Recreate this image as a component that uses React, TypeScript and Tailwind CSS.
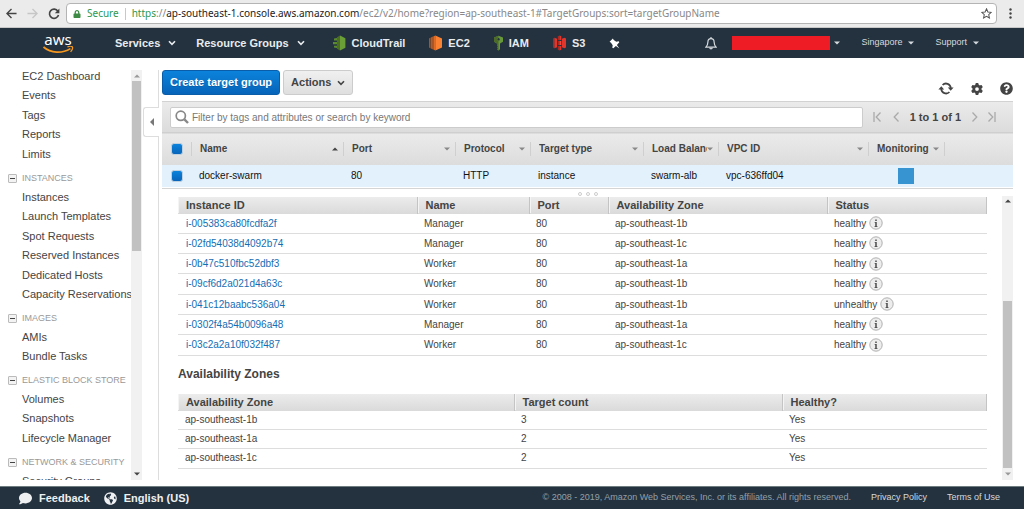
import { useState, type ReactNode } from 'react';
import { FaGlobeAmericas, FaComment, FaLock, FaQuestionCircle } from 'react-icons/fa';
import { FaGear } from 'react-icons/fa6';

const sections = [
  { title: '', items: ['EC2 Dashboard', 'Events', 'Tags', 'Reports', 'Limits'] },
  {
    title: 'INSTANCES',
    items: [
      'Instances',
      'Launch Templates',
      'Spot Requests',
      'Reserved Instances',
      'Dedicated Hosts',
      'Capacity Reservations',
    ],
  },
  { title: 'IMAGES', items: ['AMIs', 'Bundle Tasks'] },
  { title: 'ELASTIC BLOCK STORE', items: ['Volumes', 'Snapshots', 'Lifecycle Manager'] },
  { title: 'NETWORK & SECURITY', items: ['Security Groups'] },
];

const columns = [
  { label: 'Name', width: 'w-[152px]', sort: 'asc' },
  { label: 'Port', width: 'w-[112px]', sort: 'none' },
  { label: 'Protocol', width: 'w-[75px]', sort: 'none' },
  { label: 'Target type', width: 'w-[113px]', sort: 'none' },
  { label: 'Load Balancer', width: 'w-[75px]', sort: 'none' },
  { label: 'VPC ID', width: 'w-[150px]', sort: 'none' },
  { label: 'Monitoring', width: 'w-[76px]', sort: 'none' },
];

const targets = [
  { id: 'i-005383ca80fcdfa2f', name: 'Manager', port: 80, zone: 'ap-southeast-1b', status: 'healthy' },
  { id: 'i-02fd54038d4092b74', name: 'Manager', port: 80, zone: 'ap-southeast-1c', status: 'healthy' },
  { id: 'i-0b47c510fbc52dbf3', name: 'Worker', port: 80, zone: 'ap-southeast-1a', status: 'healthy' },
  { id: 'i-09cf6d2a021d4a63c', name: 'Worker', port: 80, zone: 'ap-southeast-1b', status: 'healthy' },
  { id: 'i-041c12baabc536a04', name: 'Worker', port: 80, zone: 'ap-southeast-1b', status: 'unhealthy' },
  { id: 'i-0302f4a54b0096a48', name: 'Manager', port: 80, zone: 'ap-southeast-1a', status: 'healthy' },
  { id: 'i-03c2a2a10f032f487', name: 'Worker', port: 80, zone: 'ap-southeast-1c', status: 'healthy' },
];

const zones = [
  { zone: 'ap-southeast-1b', count: 3, healthy: 'Yes' },
  { zone: 'ap-southeast-1a', count: 2, healthy: 'Yes' },
  { zone: 'ap-southeast-1c', count: 2, healthy: 'Yes' },
];

function Chevron({ className = '' }: { className?: string }) {
  return (
    <svg viewBox="0 0 8 6" className={`w-2 h-1.5 shrink-0 ${className}`} fill="none" stroke="currentColor" strokeWidth="1.6">
      <path d="M1 1.2 4 4.4 7 1.2" />
    </svg>
  );
}

function Triangle({ up = false, className = '' }: { up?: boolean; className?: string }) {
  return (
    <svg viewBox="0 0 6 4" className={`w-1.5 h-1 shrink-0 ${className}`} fill="currentColor">
      <path d={up ? 'M0 3.6 3 .4 6 3.6z' : 'M0 .4h6L3 3.6z'} />
    </svg>
  );
}

function BrowserBar() {
  return (
    <div className="h-[28px] shrink-0 flex items-center bg-[#ebebeb] border-b border-[#c8c8c8] pl-1.5 pr-3 font-['Noto_Sans',sans-serif]">
      <button aria-label="Back" className="text-[#444]">
        <svg viewBox="0 0 12 12" className="size-[11px]" fill="none" stroke="currentColor" strokeWidth="1.5">
          <path d="M11.5 6H1M6 1 1 6l5 5" />
        </svg>
      </button>
      <button aria-label="Forward" className="ml-2.5 text-[#c6c6c6]">
        <svg viewBox="0 0 12 12" className="size-[11px]" fill="none" stroke="currentColor" strokeWidth="1.5">
          <path d="M.5 6H11M6 1l5 5-5 5" />
        </svg>
      </button>
      <button aria-label="Reload" className="ml-2.5 text-[#444]">
        <svg viewBox="0 0 12 12" className="size-[12px]" fill="none" stroke="currentColor" strokeWidth="1.6">
          <path d="M9.9 3.2A4.6 4.6 0 1 0 10.5 7" />
          <path d="M11.4.6v4.6H6.8z" fill="currentColor" stroke="none" />
        </svg>
      </button>
      <div className="ml-1.5 flex-1 h-[21px] flex items-center bg-white border border-[#b4b4b4] rounded-sm pl-1.5 pr-1 text-[10px] whitespace-nowrap overflow-hidden">
        <button className="flex items-center gap-1.5 text-[#2b9752]">
          <FaLock className="size-2 text-[#3d8b45]" />
          Secure
        </button>
        <span className="w-px h-3 mx-1.5 bg-[#c8c8c8]" />
        <span className="text-[#888]">
          <span className="text-[#2b9752]">https</span>://
          <span className="text-[#222]">ap-southeast-1.console.aws.amazon.com</span>
          /ec2/v2/home?region=ap-southeast-1#TargetGroups:sort=targetGroupName
        </span>
        <button aria-label="Bookmark" className="ml-auto text-[#555]">
          <svg viewBox="0 0 12 12" className="size-[11px]" fill="none" stroke="currentColor" strokeWidth="1.1">
            <path d="m6 .9 1.5 3.4 3.7.4-2.8 2.5.8 3.7L6 9l-3.2 1.9.8-3.7L.8 4.7l3.7-.4z" />
          </svg>
        </button>
      </div>
      <button aria-label="Menu" className="ml-3 text-[#444]">
        <svg viewBox="0 0 3 11" className="w-[3px] h-[11px]" fill="currentColor">
          <circle cx="1.5" cy="1.5" r="1.2" />
          <circle cx="1.5" cy="5.5" r="1.2" />
          <circle cx="1.5" cy="9.5" r="1.2" />
        </svg>
      </button>
    </div>
  );
}

function CloudTrailIcon() {
  return (
    <svg viewBox="0 0 13 16" className="w-[13px] h-4">
      <path d="M4 2.2 7 .6v14.8l-3-1.6z" fill="#4c6b24" />
      <path d="m7 .6 5.4 2.6v9.6L7 15.4z" fill="#6a9f38" />
      <path d="M1 3.6 4 3v2.4H1zM0 6.9h4v2.4H0zM1 10.8h3V13l-3-.6z" fill="#5b8a2e" />
    </svg>
  );
}

function Ec2Icon() {
  return (
    <svg viewBox="0 0 13 16" className="w-[13px] h-4">
      <path d="m0 3.4 1.6-.8v10.8L0 12.6z" fill="#b35218" />
      <path d="M2.1 2.4 3.8 1.6v12.8l-1.7-.8z" fill="#c95f20" />
      <path d="M4.3 1.4 6.3.4v15.2l-2-1z" fill="#dc6b27" />
      <path d="M6.3.4 13 3.6v8.8l-6.7 3.2z" fill="#fb8132" />
    </svg>
  );
}

function IamIcon() {
  return (
    <svg viewBox="0 0 9 16" className="w-[9px] h-4">
      <path fillRule="evenodd" d="M4.5.8 9 2.6v4.2L6 8.6v5.6l-1.5 1.4L3 14.6l1-1.2-1-1 1-1.2-1-.9V8.6L0 6.8V2.6zM4.5 3a1.3 1.3 0 1 0 .01 0z" fill="#67983a" />
      <path fillRule="evenodd" d="M0 2.6 4.5.8V3a1.3 1.3 0 0 0 0 2.6v10l-1.5-1 1-1.2-1-1 1-1.2-1-.9V8.6L0 6.8z" fill="#4c6b2b" />
    </svg>
  );
}

function S3Icon() {
  return (
    <svg viewBox="0 0 13 16" className="w-[13px] h-4">
      <path d="m0 3.4 1.4-.7v10.6L0 12.6z" fill="#a52a22" />
      <path d="m1.4 2.7 2.7 1v8.6l-2.7 1zM13 3.4l-1.6-.7-2.5 1v8.6l2.5 1 1.6-.7z" fill="#e2352c" />
      <path d="M4.8 1.2 6.5.4v4.8l-1.7-.5z" fill="#a52a22" />
      <path d="m6.5.4 1.8.8v3.5l-1.8.5z" fill="#e2352c" />
      <path d="M4.8 6h1.7v4H4.8z" fill="#a52a22" />
      <path d="M6.5 6h1.8v4H6.5z" fill="#ee4a40" />
      <path d="m4.8 14.8 1.7.8v-4.8l-1.7.5z" fill="#a52a22" />
      <path d="m6.5 15.6 1.8-.8v-3.5l-1.8-.5z" fill="#e2352c" />
    </svg>
  );
}

const shortcuts = [
  { label: 'CloudTrail', icon: <CloudTrailIcon /> },
  { label: 'EC2', icon: <Ec2Icon /> },
  { label: 'IAM', icon: <IamIcon /> },
  { label: 'S3', icon: <S3Icon /> },
];

function NavBar() {
  return (
    <header className="h-[30px] shrink-0 flex items-center bg-[#243240] text-[#e9ecee] pl-[42px] pr-[45px]">
      <a href="#" className="w-8 flex flex-col items-center text-white font-['Noto_Sans',sans-serif] text-[15px] leading-[14px]">
        aws
        <svg viewBox="0 0 32 8" className="w-8 h-2" fill="none" stroke="#f7981f">
          <path d="M1.5 1C9 7.4 20 7.8 28.4 2.6" strokeWidth="1.7" />
          <path d="M25.4.9c2-.7 4.4-.7 4.9 0s-.1 3-1.7 4.9" strokeWidth="1.3" />
        </svg>
      </a>
      <nav className="flex items-center ml-[41px] gap-7 text-[11px] font-bold">
        <div className="flex items-center gap-5">
          <button className="flex items-center gap-2">
            Services
            <Chevron />
          </button>
          <button className="flex items-center gap-2">
            Resource Groups
            <Chevron />
          </button>
        </div>
        <div className="flex items-center gap-6">
          {shortcuts.map((s) => (
            <a key={s.label} href="#" className="flex items-center gap-1.5">
              {s.icon}
              {s.label}
            </a>
          ))}
          <button aria-label="Edit shortcuts">
            <svg viewBox="0 0 11 11" className="size-[11px]" fill="#fff">
              <path d="M.6 3.8 3.9.6l.8 1.5 2.6 1.6 2.4-.4.6 1L7.9 7l2.5 3.4L6.9 8l-2.6 2.3-1-.6.4-2.4L2 4.8z" />
            </svg>
          </button>
        </div>
      </nav>
      <div className="ml-auto flex items-center gap-[21px] text-[9px] text-[#d5dadd]">
        <button aria-label="Notifications" className="-mr-1.5">
          <svg viewBox="0 0 12 13" className="w-3 h-[13px]" fill="none" stroke="currentColor" strokeWidth="1.2">
            <path d="M6 1.6C3.8 1.6 2.9 3.2 2.9 5c0 2.8-.8 3.8-2 5.2h10.2c-1.2-1.4-2-2.4-2-5.2 0-1.8-.9-3.4-3.1-3.4z" />
            <path d="M6 0v1.6M4.7 10.6c.2 1.7 2.4 1.7 2.6 0" />
          </svg>
        </button>
        <button aria-label="Account" className="flex items-center gap-1">
          <span className="w-[98px] h-3.5 bg-[#ee1c24]" />
          <Triangle />
        </button>
        <button className="flex items-center gap-1.5">
          Singapore
          <Triangle />
        </button>
        <button className="flex items-center gap-1.5">
          Support
          <Triangle />
        </button>
      </div>
    </header>
  );
}

function ScrollTrack({ children, top, bottom }: { children: ReactNode; top: string; bottom: string }) {
  return (
    <div className="w-[11px] shrink-0 flex flex-col items-center bg-[#f1f1f1]">
      <span className="h-[11px] shrink-0 flex items-center">
        <Triangle up className={top} />
      </span>
      <div className="flex-1 w-full min-h-0 flex flex-col px-px">{children}</div>
      <span className="h-3 shrink-0 flex items-center">
        <Triangle className={bottom} />
      </span>
    </div>
  );
}

function Sidebar() {
  return (
    <aside className="w-[142px] shrink-0 flex">
      <nav className="flex-1 min-w-0 overflow-hidden pt-2 text-[11px] text-[#444] whitespace-nowrap">
        {sections.map((section) => (
          <div key={section.title}>
            {section.title && (
              <h2 className="flex items-center mt-1.5 h-[17px] pl-2 text-[9px] text-[#999]">
                <button
                  aria-label={`Collapse ${section.title}`}
                  className="size-[9px] mr-[5px] flex items-center justify-center rounded-[1px] border border-[#bbb] bg-[#f3f3f3]"
                >
                  <span className="w-[5px] h-px bg-[#444]" />
                </button>
                {section.title}
              </h2>
            )}
            <ul className="pl-[22px]">
              {section.items.map((item) => (
                <li key={item} className="leading-5 even:leading-[19px]">
                  <a href="#">{item}</a>
                </li>
              ))}
            </ul>
          </div>
        ))}
      </nav>
      <div className="flex pt-3">
        <ScrollTrack top="text-[#999]" bottom="text-[#444]">
          <div className="h-[44%] bg-[#c1c1c1]" />
        </ScrollTrack>
      </div>
    </aside>
  );
}

function Toolbar() {
  return (
    <div className="flex items-start pt-3 pb-1.5 text-[11px] font-bold">
      <button className="h-[25px] px-[7px] rounded-[3px] border border-[#0a5da8] bg-linear-to-b from-[#0c83dc] to-[#0764b9] text-white text-shadow-2xs">
        Create target group
      </button>
      <button className="h-[25px] ml-[3px] px-[7px] flex items-center gap-1.5 rounded-[3px] border border-[#ccc] bg-linear-to-b from-[#f0f0f0] to-[#dfdfdf] text-[#444]">
        Actions
        <Chevron />
      </button>
      <div className="ml-auto mt-3 flex items-center gap-[17px] text-[#444]">
        <button aria-label="Refresh">
          <svg viewBox="0 0 16 13" className="w-4 h-[13px]" fill="none" stroke="currentColor" strokeWidth="1.8">
            <path d="M4.6 3A4.7 4.7 0 0 1 12.7 6M11.4 10A4.7 4.7 0 0 1 3.3 7" />
            <path d="M9.8 5.4h5.8l-2.9 3.4zM.4 7.6h5.8L3.3 4.2z" fill="currentColor" stroke="none" />
          </svg>
        </button>
        <button aria-label="Settings">
          <FaGear className="size-3" />
        </button>
        <button aria-label="Help">
          <FaQuestionCircle className="size-[13px]" />
        </button>
      </div>
    </div>
  );
}

function Pager() {
  return (
    <div className="flex items-center ml-2.5 mr-[17px] text-[11px] font-bold text-[#444]">
      <button aria-label="First page" className="text-[#aaa]">
        <svg viewBox="0 0 8 10" className="w-2 h-2.5" fill="none" stroke="currentColor" strokeWidth="1.3">
          <path d="M1 0v10M7.5.5 3.2 5l4.3 4.5" />
        </svg>
      </button>
      <button aria-label="Previous page" className="ml-3 text-[#aaa]">
        <svg viewBox="0 0 6 10" className="w-1.5 h-2.5" fill="none" stroke="currentColor" strokeWidth="1.3">
          <path d="M5.5.5 1.2 5l4.3 4.5" />
        </svg>
      </button>
      <span className="mx-[11px] whitespace-nowrap">1 to 1 of 1</span>
      <button aria-label="Next page" className="text-[#aaa]">
        <svg viewBox="0 0 6 10" className="w-1.5 h-2.5" fill="none" stroke="currentColor" strokeWidth="1.3">
          <path d="M.5.5 4.8 5 .5 9.5" />
        </svg>
      </button>
      <button aria-label="Last page" className="ml-2.5 text-[#aaa]">
        <svg viewBox="0 0 8 10" className="w-2 h-2.5" fill="none" stroke="currentColor" strokeWidth="1.3">
          <path d="M7 0v10M.5.5 4.8 5 .5 9.5" />
        </svg>
      </button>
    </div>
  );
}

function FilterBar() {
  const [query, setQuery] = useState('');
  return (
    <div className="h-[31px] flex items-center border-t border-[#d2d2d2] bg-linear-to-b from-[#ebebeb] to-[#dcdcdc] pl-2">
      <label className="flex-1 h-[21px] flex items-center gap-[3px] pl-1 bg-white border border-[#ccc] rounded-[2px]">
        <svg viewBox="0 0 14 14" className="size-3.5 shrink-0 text-[#888]" fill="none" stroke="currentColor">
          <circle cx="5.8" cy="5.8" r="4.6" strokeWidth="1.7" />
          <path d="m9.4 9.4 3.6 3.6" strokeWidth="2.4" />
        </svg>
        <input
          type="text"
          aria-label="Filter target groups"
          value={query}
          onChange={(e) => setQuery(e.target.value)}
          placeholder="Filter by tags and attributes or search by keyword"
          className="flex-1 text-[10px] placeholder:text-[#777] outline-none"
        />
      </label>
      <Pager />
    </div>
  );
}

function CheckBox({ label }: { label: string }) {
  return (
    <input
      type="checkbox"
      defaultChecked
      aria-label={label}
      className="appearance-none block size-3 ml-[9px] rounded-[3px] border border-[#bfd0de] bg-linear-to-b from-[#0c83dc] to-[#0764b9]"
    />
  );
}

function TargetGroupTable() {
  return (
    <table className="w-full table-fixed text-[10px] text-left whitespace-nowrap">
      <thead>
        <tr className="h-8 border-t border-[#cfcfcf] bg-linear-to-b from-[#ebebeb] to-[#dcdcdc] text-[#444]">
          <th className="w-[29px]">
            <CheckBox label="Select all" />
          </th>
          {columns.map((col) => (
            <th key={col.label} className={col.width}>
              <button className="w-full h-3.5 flex items-center border-l border-[#cfcfcf] pl-2 pr-[5px]">
                <span className="flex-1 min-w-0 overflow-hidden text-left">{col.label}</span>
                <Triangle up={col.sort === 'asc'} className={col.sort === 'asc' ? 'text-[#444]' : 'text-[#888]'} />
              </button>
            </th>
          ))}
          <th>
            <div className="h-3.5 border-l border-[#cfcfcf]" />
          </th>
        </tr>
      </thead>
      <tbody>
        <tr className="h-[22px] bg-[#e3f1fd] text-[#111]">
          <td>
            <CheckBox label="Select docker-swarm" />
          </td>
          <td className="pl-2">docker-swarm</td>
          <td className="pl-2">80</td>
          <td className="pl-2">HTTP</td>
          <td className="pl-2">instance</td>
          <td className="pl-2">swarm-alb</td>
          <td className="pl-2">vpc-636ffd04</td>
          <td>
            <div className="size-4 ml-[30px] bg-[#3894d1]" />
          </td>
          <td />
        </tr>
      </tbody>
    </table>
  );
}

function HeadCell({ children, className = '' }: { children: ReactNode; className?: string }) {
  return (
    <th className={`p-0 border-r border-[#c4c4c4] text-[11px] leading-4 font-bold text-[#444] ${className}`}>
      <div className="pl-[7px] border-l border-[#f4f4f4]">{children}</div>
    </th>
  );
}

function InfoButton() {
  return (
    <button aria-label="Status details" className="ml-[3px]">
      <svg viewBox="0 0 14 14" className="size-3.5">
        <circle cx="7" cy="7" r="6.2" fill="#ededed" stroke="#b0b0b0" strokeWidth="1" />
        <path d="M6.2 3.4h1.6v1.5H6.2zM5.7 6h2.1v4h.6v.9H5.6V10h.6V6.9h-.5z" fill="#555" />
      </svg>
    </button>
  );
}

function TargetsTable() {
  return (
    <table className="w-full h-[159px] table-fixed text-[10px] text-left text-[#444]">
      <thead>
        <tr className="h-[17px] bg-linear-to-b from-[#ececec] to-[#dadada]">
          <HeadCell className="w-[239px]">Instance ID</HeadCell>
          <HeadCell className="w-[112px]">Name</HeadCell>
          <HeadCell className="w-[79px]">Port</HeadCell>
          <HeadCell className="w-[219px]">Availability Zone</HeadCell>
          <HeadCell>Status</HeadCell>
        </tr>
      </thead>
      <tbody>
        {targets.map((t) => (
          <tr key={t.id} className="border-b border-[#ddd]">
            <td className="pl-2">
              <a href="#" className="text-[#146eb4]">
                {t.id}
              </a>
            </td>
            <td className="pl-[7px]">{t.name}</td>
            <td className="pl-[7px]">{t.port}</td>
            <td className="pl-[7px]">{t.zone}</td>
            <td className="pl-[7px]">
              <div className="flex items-center">
                {t.status}
                <InfoButton />
              </div>
            </td>
          </tr>
        ))}
      </tbody>
    </table>
  );
}

function ZonesTable() {
  return (
    <table className="w-full h-[75px] table-fixed text-[10px] leading-4 text-left text-[#444]">
      <thead>
        <tr className="h-[17px] bg-linear-to-b from-[#ececec] to-[#dadada]">
          <HeadCell className="w-[336px]">Availability Zone</HeadCell>
          <HeadCell className="w-[268px]">Target count</HeadCell>
          <HeadCell>Healthy?</HeadCell>
        </tr>
      </thead>
      <tbody>
        {zones.map((z) => (
          <tr key={z.zone} className="border-b border-[#ddd]">
            <td className="pl-[7px]">{z.zone}</td>
            <td className="pl-[7px]">{z.count}</td>
            <td className="pl-[7px]">{z.healthy}</td>
          </tr>
        ))}
      </tbody>
    </table>
  );
}

function Footer() {
  return (
    <footer className="h-[23px] shrink-0 flex items-center bg-[#243240] border-t border-[#6f7d80] pl-[19px] pr-6 text-[9px] text-[#d5dadd]">
      <button className="flex items-center gap-[7px] text-[11px] font-bold text-[#eef0f1]">
        <FaComment className="size-[13px]" />
        Feedback
      </button>
      <button className="flex items-center gap-[7px] ml-3.5 text-[11px] font-bold text-[#eef0f1]">
        <FaGlobeAmericas className="size-[13px]" />
        English (US)
      </button>
      <span className="ml-auto text-[#95a0a6]">
        © 2008 - 2019, Amazon Web Services, Inc. or its affiliates. All rights reserved.
      </span>
      <a href="#" className="ml-5">
        Privacy Policy
      </a>
      <a href="#" className="ml-5">
        Terms of Use
      </a>
    </footer>
  );
}

export default function App() {
  return (
    <div className="h-screen flex flex-col bg-white overflow-hidden font-['Liberation_Sans',Arial,sans-serif]">
      <BrowserBar />
      <NavBar />
      <div className="flex-1 min-h-0 flex pb-1.5">
        <Sidebar />
        <div className="w-[17px] shrink-0 flex flex-col pt-3">
          <div className="h-[37px] border-r border-[#ddd]" />
          <button
            aria-label="Collapse sidebar"
            className="ml-px h-[30px] flex items-center justify-center border border-r-0 border-[#ddd] rounded-l-[3px] text-[#777]"
          >
            <svg viewBox="0 0 4 8" className="w-1 h-2" fill="currentColor">
              <path d="M4 0v8L0 4z" />
            </svg>
          </button>
          <div className="flex-1 border-r border-[#ddd]" />
        </div>
        <main className="flex-1 min-w-0 flex flex-col ml-[3px] mr-[11px]">
          <Toolbar />
          <FilterBar />
          <TargetGroupTable />
          <div className="h-[8px] shrink-0 mt-px flex items-end justify-center gap-1 border-t border-[#d5d5d5]">
            <span className="size-1 rounded-full border border-[#ccc]" />
            <span className="size-1 rounded-full border border-[#ccc]" />
            <span className="size-1 rounded-full border border-[#ccc]" />
          </div>
          <div className="flex-1 min-h-0 flex">
            <div className="flex-1 min-w-0 overflow-hidden pt-px pl-4 pr-[15px]">
              <TargetsTable />
              <h2 className="pt-2.5 pb-3 text-[12px] leading-4 font-bold text-[#444]">Availability Zones</h2>
              <ZonesTable />
            </div>
            <ScrollTrack top="text-[#444]" bottom="text-[#999]">
              <div className="mt-auto h-[64%] bg-[#c1c1c1]" />
            </ScrollTrack>
          </div>
        </main>
      </div>
      <Footer />
    </div>
  );
}
